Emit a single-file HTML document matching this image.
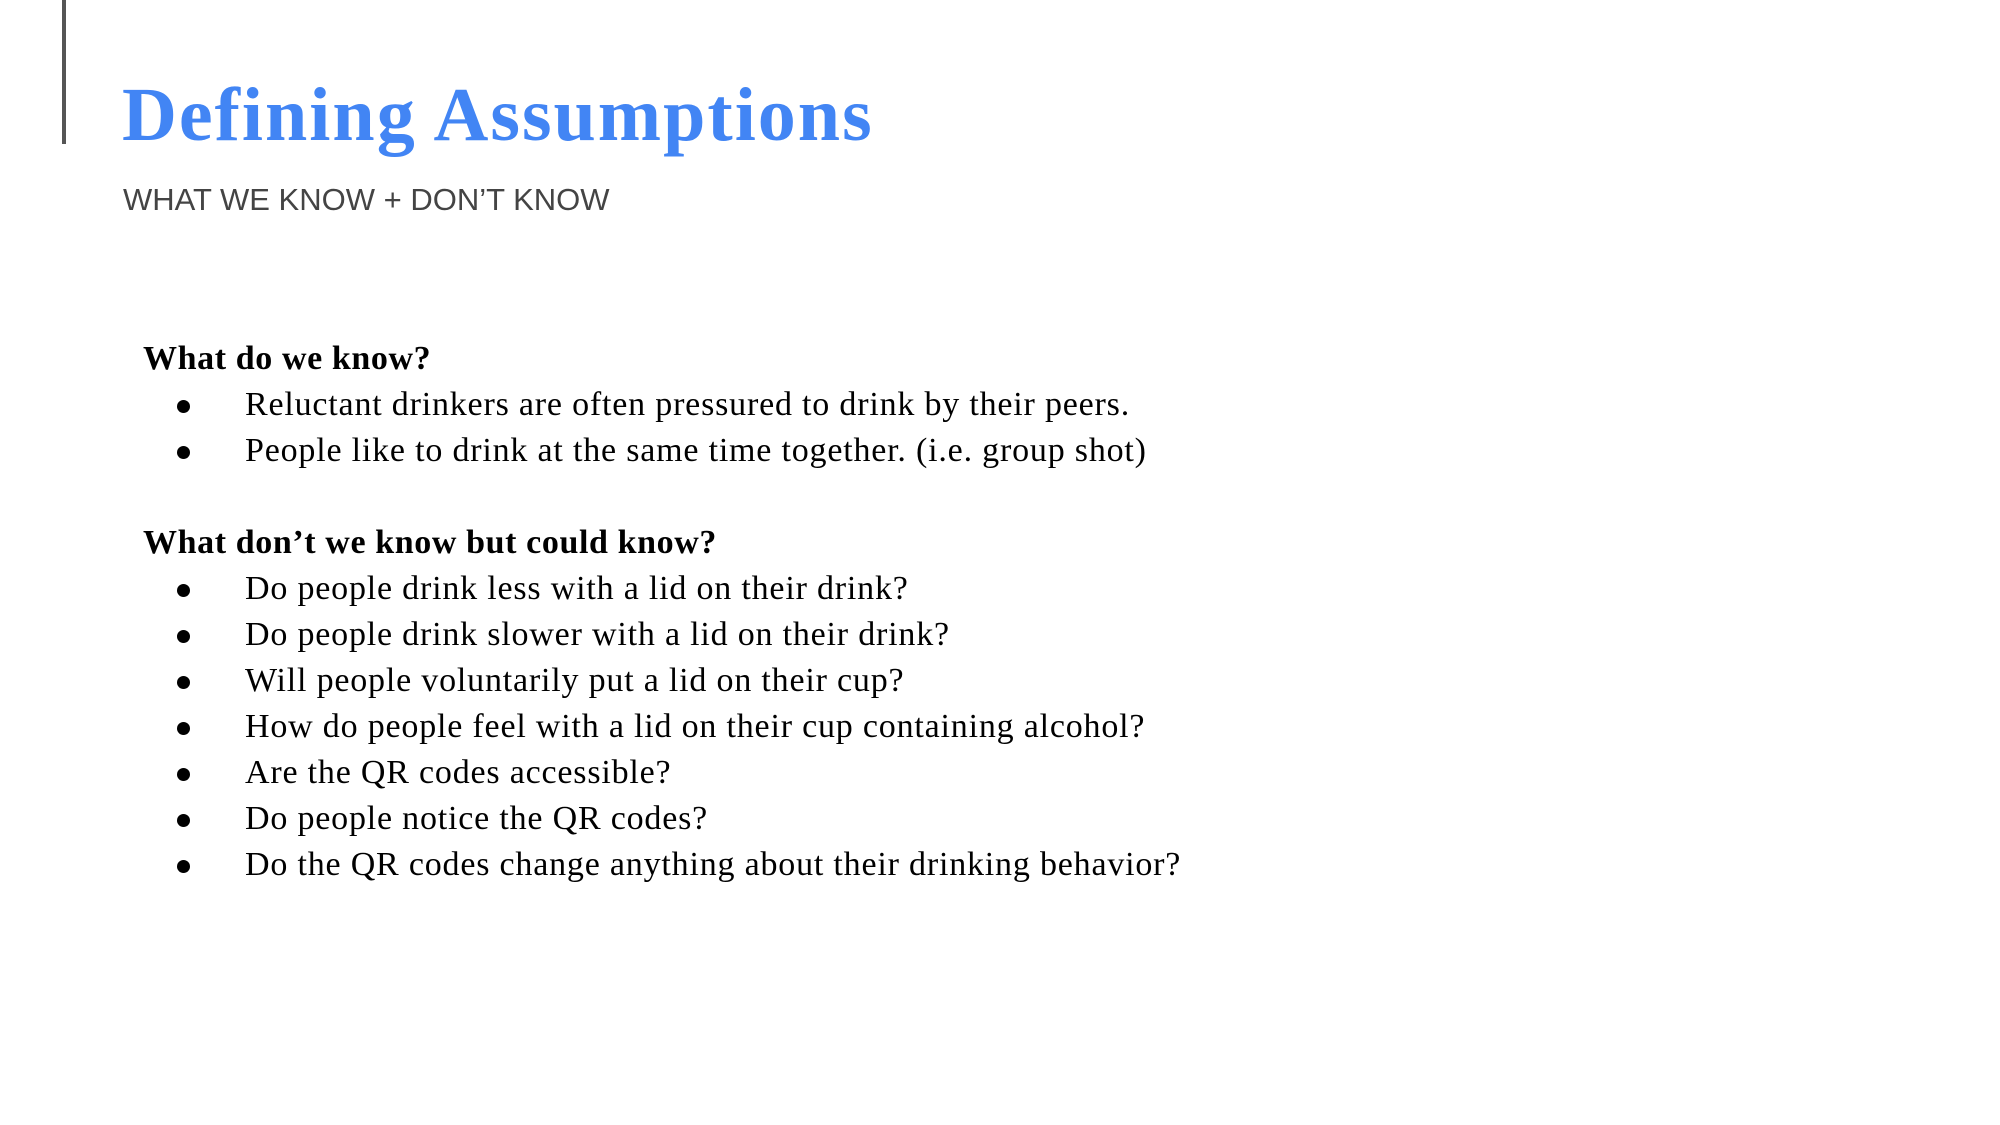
<!DOCTYPE html>
<html><head><meta charset="utf-8"><style>
html,body{margin:0;padding:0;background:#fff;width:2000px;height:1125px;overflow:hidden;position:relative}
.bar{position:absolute;left:62px;top:0;width:4px;height:144px;background:#555}
.t{position:absolute;left:122px;top:72px;font:bold 76px "Liberation Serif",serif;color:#4285f4;white-space:nowrap;letter-spacing:2px}
.s{position:absolute;left:123px;top:182px;font:31px "Liberation Sans",sans-serif;color:#444;white-space:nowrap}
.l{position:absolute;font:34px "Liberation Serif",serif;color:#000;white-space:nowrap;line-height:46px;letter-spacing:0.8px}
.h{left:143px;font-weight:bold;letter-spacing:0.6px}
.b{left:245px}
.d{position:absolute;left:177px;width:13px;height:13px;border-radius:50%;background:#000}
</style></head><body>
<div class="bar"></div>
<div class="t">Defining Assumptions</div>
<div class="s">WHAT WE KNOW + DON’T KNOW</div>
<div class="l h" style="top:336px">What do we know?</div>
<div class="d" style="top:400px"></div><div class="l b" style="top:382px">Reluctant drinkers are often pressured to drink by their peers.</div>
<div class="d" style="top:446px"></div><div class="l b" style="top:428px">People like to drink at the same time together. (i.e. group shot)</div>
<div class="l h" style="top:520px">What don’t we know but could know?</div>
<div class="d" style="top:584px"></div><div class="l b" style="top:566px">Do people drink less with a lid on their drink?</div>
<div class="d" style="top:630px"></div><div class="l b" style="top:612px">Do people drink slower with a lid on their drink?</div>
<div class="d" style="top:676px"></div><div class="l b" style="top:658px">Will people voluntarily put a lid on their cup?</div>
<div class="d" style="top:722px"></div><div class="l b" style="top:704px">How do people feel with a lid on their cup containing alcohol?</div>
<div class="d" style="top:768px"></div><div class="l b" style="top:750px">Are the QR codes accessible?</div>
<div class="d" style="top:814px"></div><div class="l b" style="top:796px">Do people notice the QR codes?</div>
<div class="d" style="top:860px"></div><div class="l b" style="top:842px">Do the QR codes change anything about their drinking behavior?</div>
</body></html>
